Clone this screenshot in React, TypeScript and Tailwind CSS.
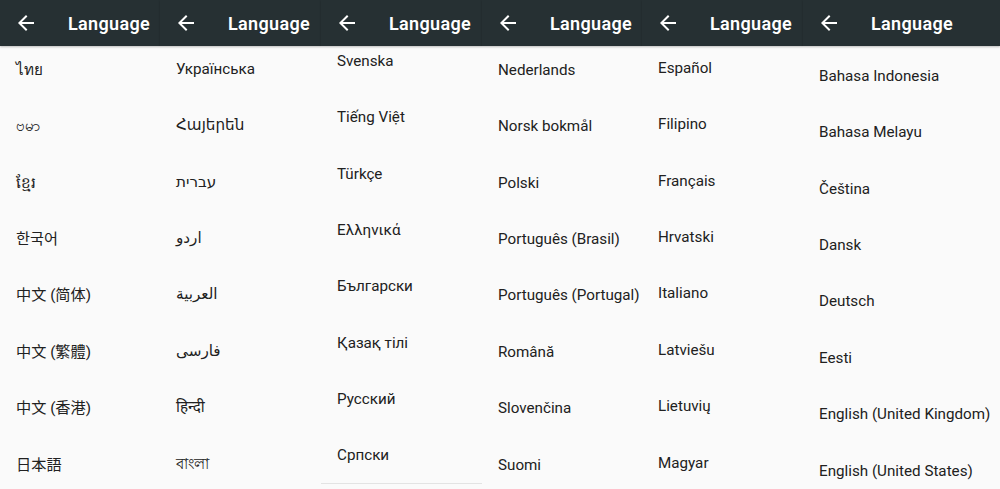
const base = "font-['Roboto','Noto_Sans','DejaVu_Sans',sans-serif]";
const sc = "font-['Roboto','Noto_Sans_CJK_SC',sans-serif]";
const tc = "font-['Roboto','Noto_Sans_CJK_TC',sans-serif]";
const jp = "font-['Roboto','Noto_Sans_CJK_JP',sans-serif]";
const kr = "font-['Roboto','Noto_Sans_CJK_KR',sans-serif]";

type Item = { label: string; font?: string };
type Panel = { width: string; offset: string; items: Item[]; divider?: boolean };

const panels: Panel[] = [
  {
    width: 'w-[160px]',
    offset: 'mt-[-4px]',
    items: [
      { label: 'ไทย' },
      { label: 'ဗမာ' },
      { label: 'ខ្មែរ' },
      { label: '한국어', font: kr },
      { label: '中文 (简体)', font: sc },
      { label: '中文 (繁體)', font: tc },
      { label: '中文 (香港)', font: tc },
      { label: '日本語', font: jp },
    ],
  },
  {
    width: 'w-[161px]',
    offset: 'mt-[-5px]',
    items: [
      { label: 'Українська' },
      { label: 'Հայերեն' },
      { label: 'עברית' },
      { label: 'اردو' },
      { label: 'العربية' },
      { label: 'فارسی' },
      { label: 'हिन्दी' },
      { label: 'বাংলা' },
    ],
  },
  {
    width: 'w-[161px]',
    offset: 'mt-[-13px]',
    divider: true,
    items: [
      { label: 'Svenska' },
      { label: 'Tiếng Việt' },
      { label: 'Türkçe' },
      { label: 'Ελληνικά' },
      { label: 'Български' },
      { label: 'Қазақ тілі' },
      { label: 'Русский' },
      { label: 'Српски' },
    ],
  },
  {
    width: 'w-[160px]',
    offset: 'mt-[-4px]',
    items: [
      { label: 'Nederlands' },
      { label: 'Norsk bokmål' },
      { label: 'Polski' },
      { label: 'Português (Brasil)' },
      { label: 'Português (Portugal)' },
      { label: 'Română' },
      { label: 'Slovenčina' },
      { label: 'Suomi' },
    ],
  },
  {
    width: 'w-[161px]',
    offset: 'mt-[-6px]',
    items: [
      { label: 'Español' },
      { label: 'Filipino' },
      { label: 'Français' },
      { label: 'Hrvatski' },
      { label: 'Italiano' },
      { label: 'Latviešu' },
      { label: 'Lietuvių' },
      { label: 'Magyar' },
    ],
  },
  {
    width: 'w-[197px]',
    offset: 'mt-[2px]',
    items: [
      { label: 'Bahasa Indonesia' },
      { label: 'Bahasa Melayu' },
      { label: 'Čeština' },
      { label: 'Dansk' },
      { label: 'Deutsch' },
      { label: 'Eesti' },
      { label: 'English (United Kingdom)' },
      { label: 'English (United States)' },
    ],
  },
];

function BackArrow() {
  return (
    <svg width="24" height="24" viewBox="0 0 24 24" fill="white">
      <path d="M20 11H7.83l5.59-5.59L12 4l-8 8 8 8 1.41-1.41L7.83 13H20v-2z" />
    </svg>
  );
}

function LanguagePanel({ panel }: { panel: Panel }) {
  return (
    <div className={`${panel.width} shrink-0 h-full flex flex-col bg-[#fafafa]`}>
      <div className="relative z-10 h-[46px] shrink-0 bg-[#263033] flex items-center pl-[14px] shadow-[0_1px_2px_rgba(0,0,0,0.25)]">
        <BackArrow />
        <span className={`${base} ml-[30px] text-white text-[18px] font-semibold tracking-[0.35px]`}>Language</span>
      </div>
      <div className="flex-1 overflow-hidden">
        <ul className={panel.offset}>
          {panel.items.map((item, i) => (
            <li
              key={item.label}
              className={`h-[56.4px] flex items-center pl-4 whitespace-nowrap ${
                panel.divider && i === panel.items.length - 1 ? 'border-b border-[#e3e3e3]' : ''
              }`}
            >
              <span className={`${item.font ?? base} text-[15.2px] text-[#212121]`}>{item.label}</span>
            </li>
          ))}
        </ul>
      </div>
    </div>
  );
}

export default function App() {
  return (
    <div className="w-[1000px] h-[489px] flex overflow-hidden bg-[#fafafa]">
      {panels.map((p, i) => (
        <LanguagePanel key={i} panel={p} />
      ))}
    </div>
  );
}
